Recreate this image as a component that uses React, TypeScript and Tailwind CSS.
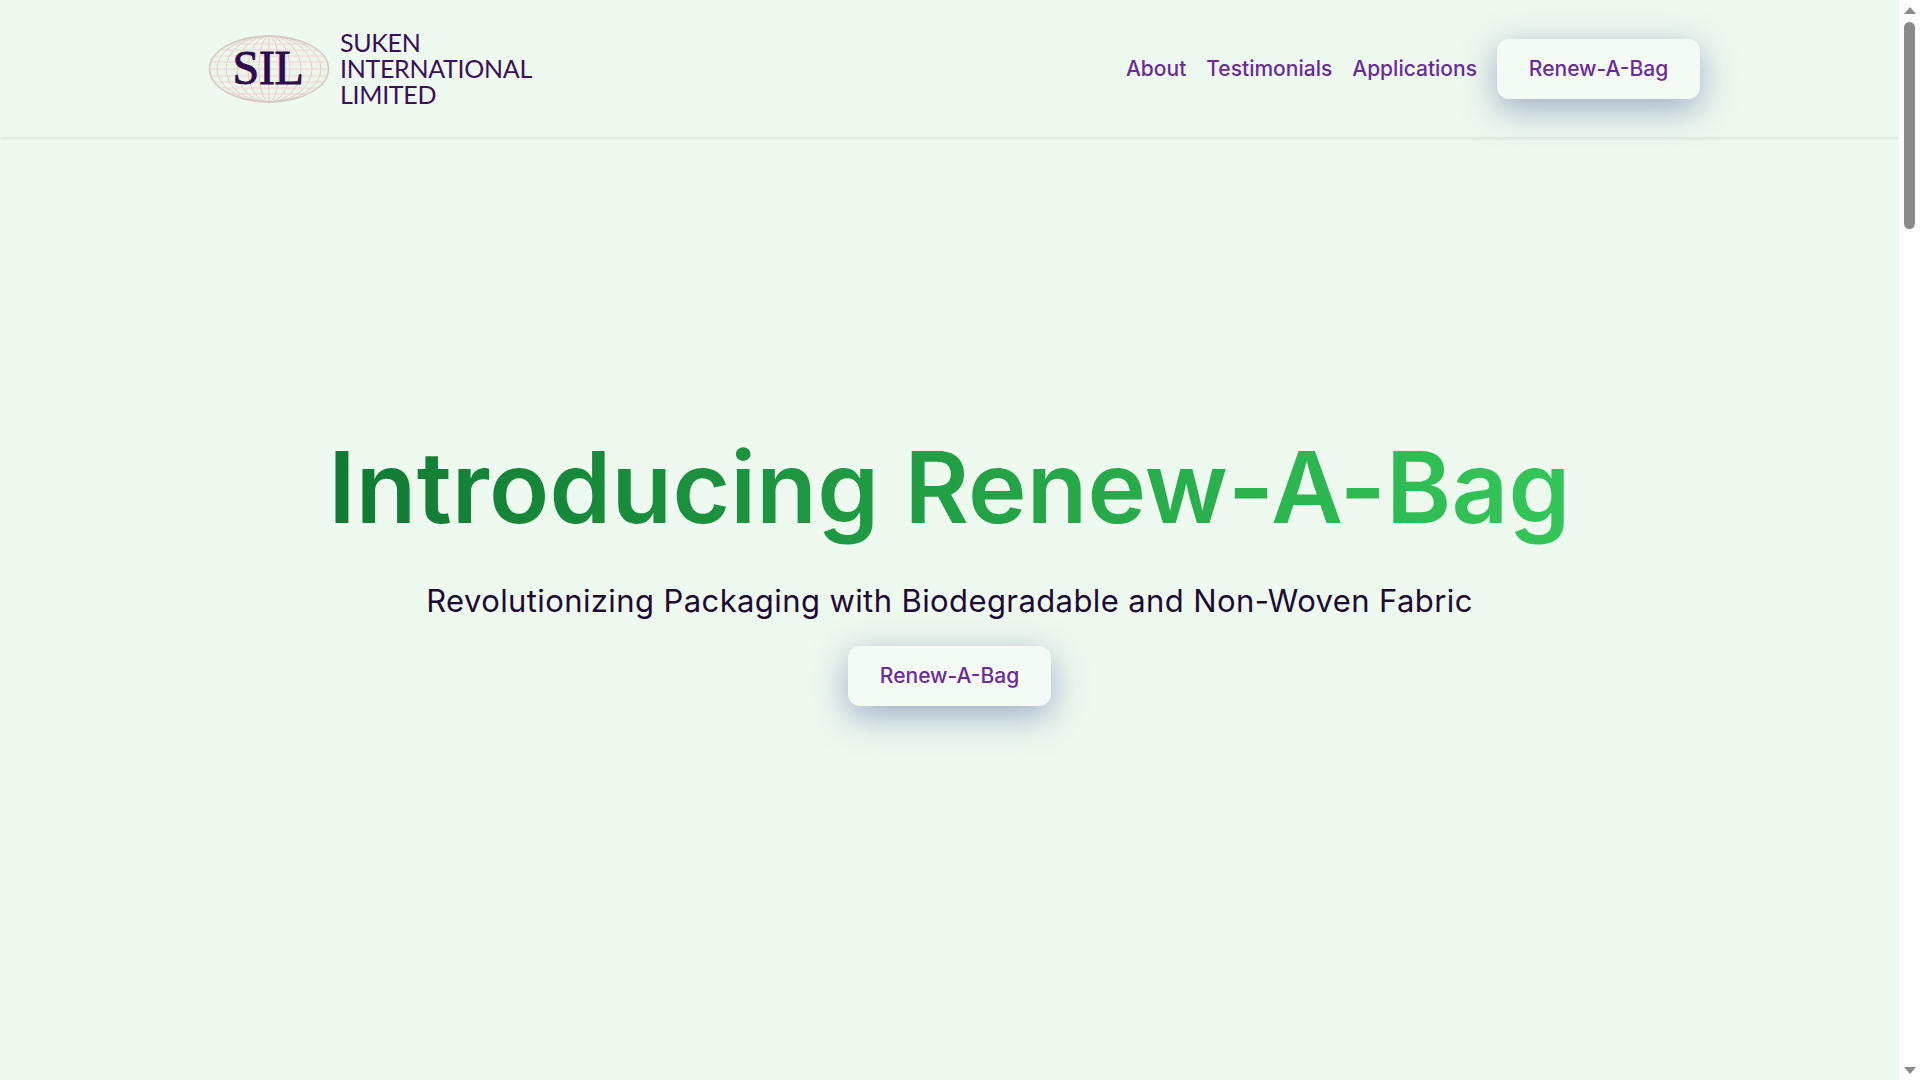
const navLinks = ['About', 'Testimonials', 'Applications'];

const meridians = [10, 21, 32, 43, 52];
const parallels = [10, 16, 22, 28, 35, 42, 48, 54, 60];

const GlobeLogo = () => (
  <svg width="122" height="70" viewBox="0 0 122 70" className="shrink-0">
    <ellipse cx="61" cy="35" rx="59.5" ry="33" fill="#eff4ea" stroke="#d3c9c0" strokeWidth="1.5" />
    <g fill="none" stroke="#d6cbc5" strokeWidth="0.9">
      {meridians.map((rx) => (
        <ellipse key={rx} cx="61" cy="35" rx={rx} ry="33" />
      ))}
      <path d="M61 2V68" />
      {parallels.map((y) => {
        const half = 59.5 * Math.sqrt(1 - ((y - 35) / 33) ** 2);
        return <path key={y} d={`M${61 - half} ${y}H${61 + half}`} stroke="#ebd2d2" />;
      })}
    </g>
    <text
      x="60"
      y="50"
      textAnchor="middle"
      fill="#2e0a4f"
      fontFamily="'Liberation Serif', serif"
      fontSize="48"
      letterSpacing="-0.4"
      stroke="#2e0a4f"
      strokeWidth="0.9"
    >
      SIL
    </text>
  </svg>
);

const RenewButton = () => (
  <a className="flex h-[60px] w-[203px] items-center justify-center rounded-[12px] bg-[#f4fbf5] text-[21px] font-medium text-[#6b2a9e] shadow-[0_10px_35px_rgba(80,95,160,0.5)]">
    Renew-A-Bag
  </a>
);

const Scrollbar = () => (
  <div className="flex h-full w-[21px] shrink-0 flex-col items-center bg-[#fdfdfd] pt-[7px] pb-[6px]">
    <svg width="12" height="7" viewBox="0 0 12 7">
      <path d="M6 0L12 7H0Z" fill="#8a8a8a" />
    </svg>
    <div className="mt-[8px] h-[207px] w-[11px] rounded-full bg-[#8a8a8a]" />
    <svg width="12" height="7" viewBox="0 0 12 7" className="mt-auto">
      <path d="M6 7L12 0H0Z" fill="#8a8a8a" />
    </svg>
  </div>
);

export default function App() {
  return (
    <div className="flex h-screen overflow-hidden bg-[#eef9ef] font-['Inter',sans-serif]">
      <div className="flex min-w-0 flex-1 flex-col">
        <header className="flex h-[137px] shrink-0 items-center justify-between pl-[208px] pr-[199px] shadow-[0_1px_4px_rgba(0,0,0,0.12)]">
          <div className="flex items-center gap-[10px]">
            <GlobeLogo />
            <div className="-mt-[2px] font-['Lato',sans-serif] text-[25px] leading-[26px] tracking-[-0.3px] text-[#3b0f5c]">
              <div>SUKEN</div>
              <div>INTERNATIONAL</div>
              <div>LIMITED</div>
            </div>
          </div>
          <nav className="flex items-center gap-[20px] pt-px">
            {navLinks.map((link) => (
              <a key={link} className="text-[21px] font-medium text-[#6b2a9e]">
                {link}
              </a>
            ))}
            <RenewButton />
          </nav>
        </header>

        <main className="flex flex-1 flex-col items-center pt-[278px]">
          <h1 className="bg-gradient-to-r from-[#107a33] to-[#34c759] bg-clip-text pb-[19px] text-[99px] leading-[144px] font-semibold tracking-[0.2px] text-transparent">
            Introducing Renew-A-Bag
          </h1>
          <p className="text-[31px] leading-[45px] tracking-[0.4px] text-[#1f0a33]">
            Revolutionizing Packaging with Biodegradable and Non-Woven Fabric
          </p>
          <div className="mt-[23px]">
            <RenewButton />
          </div>
        </main>
      </div>
      <Scrollbar />
    </div>
  );
}
